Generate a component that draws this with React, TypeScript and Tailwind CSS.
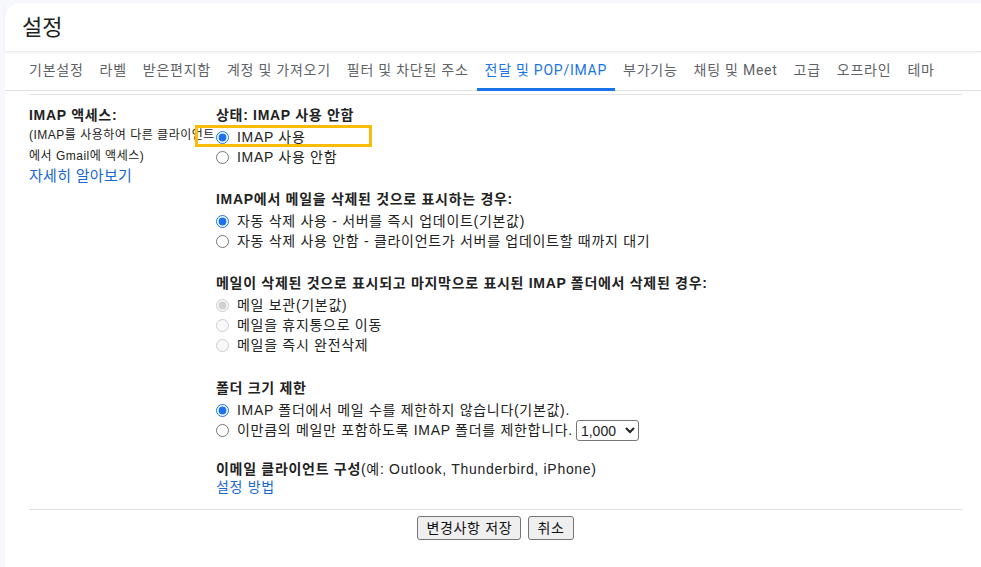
import React from 'react';

const tabs = [
  '기본설정',
  '라벨',
  '받은편지함',
  '계정 및 가져오기',
  '필터 및 차단된 주소',
  '전달 및 POP/IMAP',
  '부가기능',
  '채팅 및 Meet',
  '고급',
  '오프라인',
  '테마',
];

const ACTIVE = '전달 및 POP/IMAP';

interface RadioProps {
  name: string;
  label: React.ReactNode;
  checked?: boolean;
  disabled?: boolean;
  children?: React.ReactNode;
}

const RadioRow: React.FC<RadioProps> = ({ name, label, checked, disabled, children }) => (
  <label className="flex items-center h-[20px] text-[#222]">
    <input
      type="radio"
      name={name}
      defaultChecked={checked}
      disabled={disabled}
      className="w-[13px] h-[13px] m-0 accent-[#1a73e8] shrink-0"
    />
    <span className="ml-[8px] whitespace-nowrap">{label}</span>
    {children}
  </label>
);

const Heading: React.FC<{ children: React.ReactNode; gap?: boolean }> = ({ children, gap = true }) => (
  <div className={`h-[21px] pt-[2px] flex items-center font-bold text-[#222] whitespace-nowrap ${gap ? 'mb-[2px]' : ''}`}>
    {children}
  </div>
);

const App: React.FC = () => {
  return (
    <div
      className="min-h-screen bg-[#f6f8fc] pl-[5px] pt-[3px]"
      style={{ fontFamily: '"Liberation Sans", Arial, "Noto Sans CJK KR", sans-serif' }}
    >
      <div className="bg-white rounded-tl-[16px] min-h-[564px]">
        {/* header */}
        <div className="h-[49px] flex items-center pl-[17px] border-b border-[#e8eaed] shadow-[0_1px_2px_rgba(60,64,67,0.08)]">
          <h1
            className="text-[22px] text-[#1f1f1f] font-normal"
            style={{ fontFamily: 'Roboto, "Noto Sans CJK KR", sans-serif' }}
          >
            설정
          </h1>
        </div>

        {/* tabs */}
        <div
          className="h-[39px] flex items-stretch pl-[16px] border-b border-[#e0e0e0] text-[14px] tracking-[0.75px]"
          style={{ fontFamily: 'Roboto, "Noto Sans CJK KR", sans-serif' }}
        >
          {tabs.map((t) => (
            <div
              key={t}
              className={`px-[8px] flex items-center whitespace-nowrap border-b-[3px] -mb-px ${
                t === ACTIVE ? 'text-[#1a73e8] border-[#1a73e8]' : 'text-[#5f6368] border-transparent'
              }`}
            >
              {t}
            </div>
          ))}
        </div>

        {/* content */}
        <div className="ml-[24px] mr-[19px] mt-[3px] border-t border-[#e5e5e5] text-[14px] tracking-[0.7px]">
          <div className="flex pt-[9px] pb-[13px]">
            <div className="w-[187px] shrink-0 text-[#222]">
              <Heading gap={false}>IMAP 액세스:</Heading>
              <div className="text-[12px] leading-[20.5px] tracking-[0.5px] whitespace-nowrap">
                (IMAP를 사용하여 다른 클라이언트
                <br />
                에서 Gmail에 액세스)
              </div>
              <a className="text-[15px] leading-[20px] tracking-[0.3px] text-[#1967d2] block whitespace-nowrap">
                자세히 알아보기
              </a>
            </div>

            <div className="flex-1 relative">
              <div className="absolute left-[-21px] top-[21px] w-[177px] h-[22px] border-[3px] border-[#fbbc05] pointer-events-none" />

              <section>
                <Heading>상태: IMAP 사용 안함</Heading>
                <RadioRow name="imap" label="IMAP 사용" checked />
                <RadioRow name="imap" label="IMAP 사용 안함" />
              </section>

              <section className="mt-[21px]">
                <Heading>IMAP에서 메일을 삭제된 것으로 표시하는 경우:</Heading>
                <RadioRow name="expunge" label="자동 삭제 사용 - 서버를 즉시 업데이트(기본값)" checked />
                <RadioRow name="expunge" label="자동 삭제 사용 안함 - 클라이언트가 서버를 업데이트할 때까지 대기" />
              </section>

              <section className="mt-[21px]">
                <Heading>메일이 삭제된 것으로 표시되고 마지막으로 표시된 IMAP 폴더에서 삭제된 경우:</Heading>
                <RadioRow name="deleted" label="메일 보관(기본값)" checked disabled />
                <RadioRow name="deleted" label="메일을 휴지통으로 이동" disabled />
                <RadioRow name="deleted" label="메일을 즉시 완전삭제" disabled />
              </section>

              <section className="mt-[22px]">
                <Heading>폴더 크기 제한</Heading>
                <RadioRow name="limit" label="IMAP 폴더에서 메일 수를 제한하지 않습니다(기본값)." checked />
                <div className="h-[21px] flex items-center">
                  <RadioRow name="limit" label="이만큼의 메일만 포함하도록 IMAP 폴더를 제한합니다.">
                    <select
                      defaultValue="1000"
                      className="ml-[3px] h-[21px] w-[63px] border border-[#767676] rounded-[3px] text-[14px] tracking-normal text-[#222] bg-white"
                    >
                      <option value="1000">1,000</option>
                      <option value="2000">2,000</option>
                      <option value="5000">5,000</option>
                      <option value="10000">10,000</option>
                    </select>
                  </RadioRow>
                </div>
              </section>

              <section className="mt-[17px]">
                <div className="h-[21px] pt-[2px] flex items-center text-[#222] whitespace-nowrap">
                  <span className="font-bold">이메일 클라이언트 구성</span>
                  <span>(예: Outlook, Thunderbird, iPhone)</span>
                </div>
                <a className="block h-[17px] leading-[17px] text-[#1967d2]">설정 방법</a>
              </section>
            </div>
          </div>

          <div className="border-t border-[#e0e0e0] flex justify-center gap-[7px] pt-[6px]">
            <button className="h-[24px] px-[8px] bg-[#efefef] border border-[#767676] rounded-[3px] text-[14px] text-[#111]">
              변경사항 저장
            </button>
            <button className="h-[24px] px-[8px] bg-[#efefef] border border-[#767676] rounded-[3px] text-[14px] text-[#111]">
              취소
            </button>
          </div>
        </div>
      </div>
    </div>
  );
};

export default App;
